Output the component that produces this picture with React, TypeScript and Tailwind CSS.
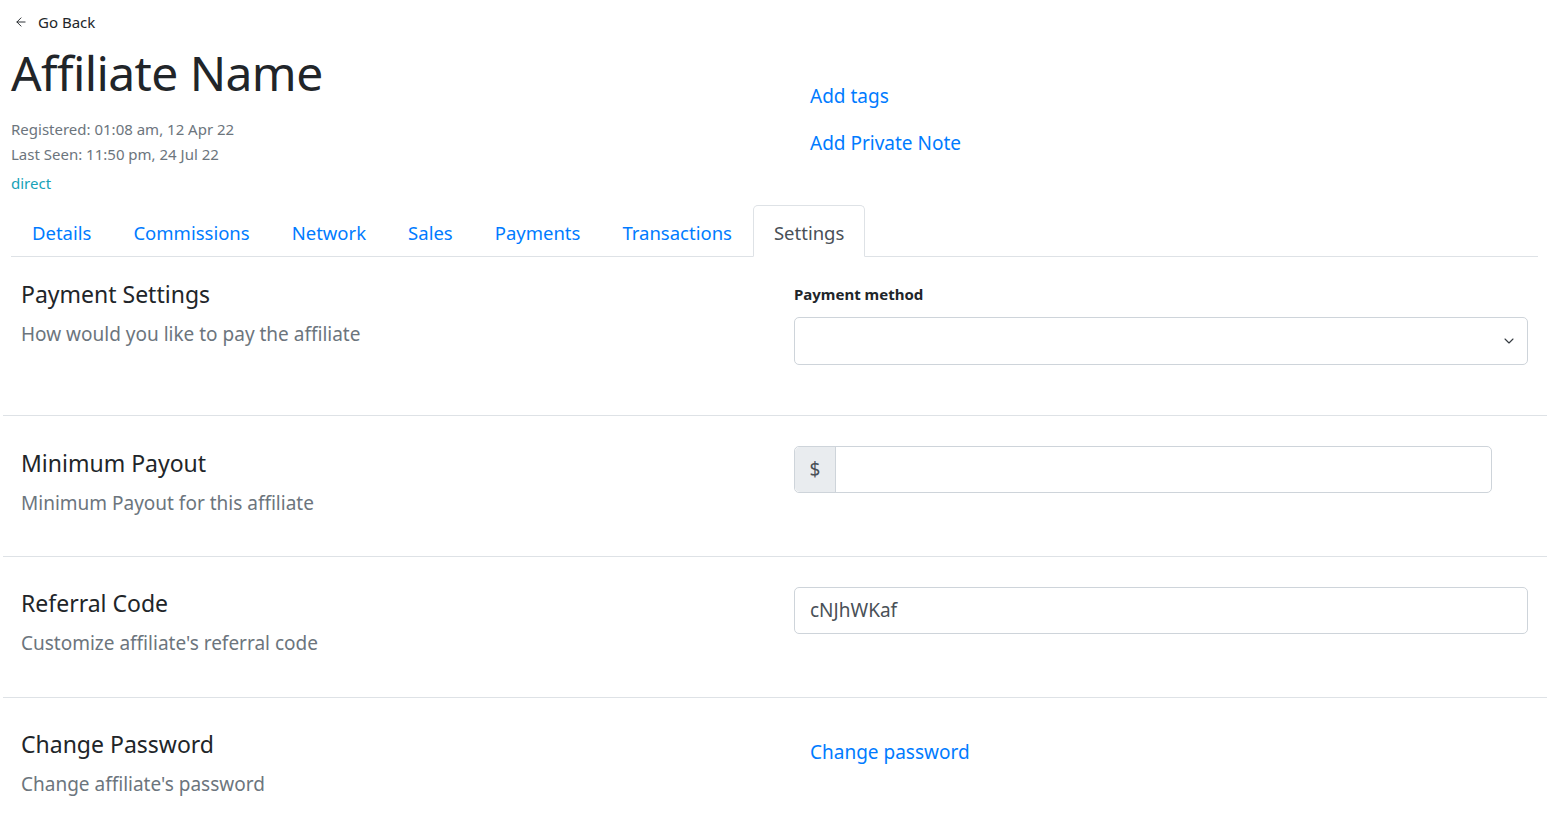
import { ArrowLeft, ChevronDown } from "lucide-react";

const tabs = ["Details", "Commissions", "Network", "Sales", "Payments", "Transactions", "Settings"];

function Section({ title, desc, children }: { title: string; desc: string; children: React.ReactNode }) {
  return (
    <div className="flex">
      <div className="w-[791px] pl-[18px] pr-4">
        <h5 className="text-[23px] leading-[30px] text-[#212529]">{title}</h5>
        <p className="mt-[10px] text-[19px] leading-[30px] text-[#6c757d]">{desc}</p>
      </div>
      <div className="flex-1 pr-[19px]">{children}</div>
    </div>
  );
}

export default function App() {
  return (
    <div className="min-h-screen bg-white font-['Noto_Sans','Open_Sans',sans-serif] text-[#212529]">
      <div className="px-[11px] pt-[10px]">
        <a className="flex items-center gap-[10px] text-[15px] leading-[24px]">
          <span className="flex w-[17px] justify-end">
            <ArrowLeft size={14} strokeWidth={1.6} />
          </span>
          <span>Go Back</span>
        </a>
        <div className="flex">
          <div className="w-[783px]">
            <h1 className="mt-[11px] text-[48px] leading-[56px] tracking-[-0.6px]">Affiliate Name</h1>
            <p className="mt-[16px] text-[15px] leading-[25px] text-[#6c757d]">Registered: 01:08 am, 12 Apr 22</p>
            <p className="text-[15px] leading-[25px] text-[#6c757d]">Last Seen: 11:50 pm, 24 Jul 22</p>
            <p className="mt-[4px] text-[15px] leading-[25px] text-[#17a2b8]">direct</p>
          </div>
          <div className="pl-[16px] pt-[48px]">
            <a className="block text-[19px] leading-[28px] text-[#007bff]">Add tags</a>
            <a className="mt-[19px] block text-[19px] leading-[28px] text-[#007bff]">Add Private Note</a>
          </div>
        </div>
        <div className="mr-[1px] mt-[9px] flex border-b border-[#dee2e6]">
          {tabs.map((t) => (
            <div
              key={t}
              className={`-mb-px h-[52px] rounded-t-[5px] border px-[20px] text-[18.5px] leading-[54px] ${
                t === "Settings"
                  ? "border-[#dee2e6] border-b-white bg-white text-[#495057]"
                  : "border-transparent text-[#007bff]"
              }`}
            >
              {t}
            </div>
          ))}
        </div>
      </div>

      <div className="px-[3px]">
        <div className="flex border-b border-[#dee2e6] pt-[22px] pb-[50px]">
          <div className="w-[791px] pl-[18px]">
            <h5 className="text-[23px] leading-[30px]">Payment Settings</h5>
            <p className="mt-[10px] text-[19px] leading-[30px] text-[#6c757d]">How would you like to pay the affiliate</p>
          </div>
          <div className="flex-1 pr-[19px]">
            <label className="block pt-[5px] text-[15px] font-bold leading-[20px] text-[#212529]">Payment method</label>
            <div className="mt-[13px] flex h-[48px] items-center justify-end rounded-[5px] border border-[#ced4da] pr-[10px]">
              <ChevronDown size={16} strokeWidth={1.6} className="text-[#343a40]" />
            </div>
          </div>
        </div>

        <div className="pt-[32px] pb-[38px]">
          <Section title="Minimum Payout" desc="Minimum Payout for this affiliate">
            <div className="-mt-[2px] flex h-[47px] w-[698px] rounded-[5px] border border-[#ced4da]">
              <div className="flex w-[41px] items-center justify-center rounded-l-[5px] border-r border-[#ced4da] bg-[#e9ecef] text-[19px] text-[#495057]">
                $
              </div>
              <div className="flex-1" />
            </div>
          </Section>
        </div>
        <div className="border-t border-[#dee2e6] pt-[31px] pb-[39px]">
          <Section title="Referral Code" desc="Customize affiliate's referral code">
            <div className="-mt-[1px] flex h-[47px] items-center rounded-[5px] border border-[#ced4da] px-[15px] text-[19px] text-[#495057]">
              cNJhWKaf
            </div>
          </Section>
        </div>
        <div className="border-t border-[#dee2e6] pt-[31px] pb-[20px]">
          <Section title="Change Password" desc="Change affiliate's password">
            <a className="mt-[8px] block pl-[16px] text-[19px] leading-[30px] text-[#007bff]">Change password</a>
          </Section>
        </div>
      </div>
    </div>
  );
}
